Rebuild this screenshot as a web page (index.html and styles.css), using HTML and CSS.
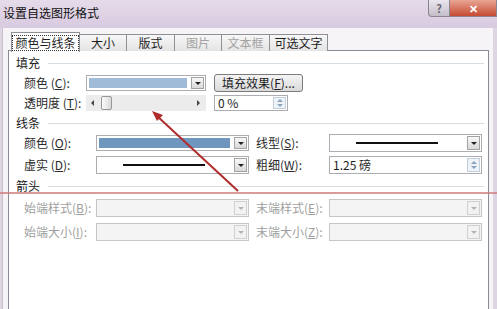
FILE: index.html
```html
<!DOCTYPE html>
<html lang="zh-CN">
<head>
    <meta charset="UTF-8">
    <title>设置自选图形格式</title>
    <link rel="stylesheet" href="styles.css">
</head>
<body>
    <div class="window">
        <div class="titlebar">
            <span class="title">设置自选图形格式</span>
            <div class="caption-buttons">
                <span class="cap-btn help">?</span>
                <span class="cap-btn close">✕</span>
            </div>
        </div>

        <div class="dialog">
            <div class="tabs">
                <span class="tab tab-colors selected"><span class="focus">颜色与线条</span></span>
                <span class="tab tab-size">大小</span>
                <span class="tab tab-layout">版式</span>
                <span class="tab tab-picture disabled">图片</span>
                <span class="tab tab-textbox disabled">文本框</span>
                <span class="tab tab-alt">可选文字</span>
            </div>

            <div class="panel">
                <!-- 填充 -->
                <div class="section-title first"><span>填充</span></div>
                <div class="row">
                    <span class="lbl lbl-fill">颜色 (<u>C</u>):</span>
                    <div class="combo combo-fill">
                        <span class="swatch swatch-fill"></span>
                        <span class="drop"></span>
                    </div>
                    <button class="btn">填充效果(<u>F</u>)...</button>
                </div>
                <div class="row compact">
                    <span class="lbl lbl-fill">透明度 (<u>T</u>):</span>
                    <div class="slider">
                        <span class="arrow-left"></span>
                        <span class="thumb"></span>
                        <span class="arrow-right"></span>
                    </div>
                    <div class="spin spin-alpha">
                        <span class="spin-text">0 %</span>
                        <span class="spin-arrows"><i class="up"></i><i class="down"></i></span>
                    </div>
                </div>

                <!-- 线条 -->
                <div class="section-title"><span>线条</span></div>
                <div class="row">
                    <span class="lbl lbl-line">颜色 (<u>O</u>):</span>
                    <div class="combo combo-line">
                        <span class="swatch swatch-line"></span>
                        <span class="drop"></span>
                    </div>
                    <span class="lbl lbl-right">线型(<u>S</u>):</span>
                    <div class="combo combo-line tall">
                        <span class="sample"><span class="stroke"></span></span>
                        <span class="drop"></span>
                    </div>
                </div>
                <div class="row">
                    <span class="lbl lbl-line">虚实 (<u>D</u>):</span>
                    <div class="combo combo-line tall">
                        <span class="sample"><span class="stroke"></span></span>
                        <span class="drop"></span>
                    </div>
                    <span class="lbl lbl-right">粗细(<u>W</u>):</span>
                    <div class="spin spin-weight">
                        <span class="spin-text">1.25 磅</span>
                        <span class="spin-arrows"><i class="up"></i><i class="down"></i></span>
                    </div>
                </div>

                <!-- 箭头 -->
                <div class="section-title loose"><span>箭头</span></div>
                <div class="row loose off">
                    <span class="lbl lbl-line">始端样式(<u>B</u>):</span>
                    <div class="combo combo-line tall"><span class="sample"></span><span class="drop"></span></div>
                    <span class="lbl lbl-right">末端样式(<u>E</u>):</span>
                    <div class="combo combo-line tall"><span class="sample"></span><span class="drop"></span></div>
                </div>
                <div class="row loose off">
                    <span class="lbl lbl-line">始端大小(<u>I</u>):</span>
                    <div class="combo combo-line tall"><span class="sample"></span><span class="drop"></span></div>
                    <span class="lbl lbl-right">末端大小(<u>Z</u>):</span>
                    <div class="combo combo-line tall"><span class="sample"></span><span class="drop"></span></div>
                </div>
            </div>
        </div>

        <!-- annotation drawn over the screenshot -->
        <svg class="annotation" width="497" height="309" viewBox="0 0 497 309">
            <line x1="0" y1="193" x2="497" y2="193" stroke="#cf7a7a" stroke-width="1.5"/>
            <line x1="238" y1="191" x2="157" y2="116" stroke="#b02c2c" stroke-width="2"/>
            <polygon points="152,111 163,115 157,121" fill="#b02c2c"/>
        </svg>
    </div>
</body>
</html>
```

FILE: styles.css
```css
* {
    margin: 0;
    padding: 0;
    box-sizing: border-box;
}

body {
    width: 497px;
    height: 309px;
    overflow: hidden;
    background: #ddd5e2;
    font-family: "Noto Sans CJK SC", "Liberation Sans", sans-serif;
    font-size: 12px;
    color: #1e1e1e;
}

.window {
    position: relative;
    height: 309px;
    display: flex;
    flex-direction: column;
}

/* Title bar */
.titlebar {
    height: 28px;
    display: flex;
    align-items: flex-start;
    background: linear-gradient(180deg, #e6dbe9, #d8cae0);
}

.title {
    padding: 5px 0 0 3px;
    line-height: 16px;
    color: #111;
}

.caption-buttons {
    margin-left: auto;
    display: flex;
}

.cap-btn {
    height: 17px;
    display: flex;
    align-items: center;
    justify-content: center;
    border: 1px solid #8b8590;
    border-top: none;
    font-size: 11px;
    line-height: 1;
}

.help {
    width: 22px;
    border-radius: 0 0 0 4px;
    background: linear-gradient(180deg, #ebe7ee, #c4bec9);
    color: #6a6670;
    font-weight: bold;
}

.close {
    width: 47px;
    border-left: none;
    background: linear-gradient(180deg, #e9a594, #c64a32);
    color: #fff;
    font-weight: bold;
}

/* Dialog body */
.dialog {
    flex: 1;
    display: flex;
    flex-direction: column;
    margin: 0 4px 0 2px;
    padding: 4px 4px 0 5px;
    background: #f6f4f7;
    border-left: 1px solid #c9c1cd;
}

.tabs {
    height: 19px;
    display: flex;
    align-items: flex-end;
    padding-left: 3px;
    position: relative;
    z-index: 1;
}

.tab {
    height: 17px;
    margin-right: -1px;
    display: flex;
    align-items: center;
    justify-content: center;
    border: 1px solid #8e9096;
    border-bottom: none;
    background: linear-gradient(180deg, #f7f7f7, #e4e4e4);
    line-height: 14px;
}

.tab.selected {
    height: 20px;
    margin-bottom: -1px;
    background: #fff;
}

.tab.disabled {
    color: #a3a3a3;
}

.focus {
    border: 1px dotted #333;
    padding: 0 2px;
}

.tab-colors { width: 69px; }
.tab-size { width: 48px; }
.tab-layout { width: 49px; }
.tab-picture { width: 48px; }
.tab-textbox { width: 49px; }
.tab-alt { width: 59px; }

.panel {
    flex: 1;
    margin-top: -1px;
    padding: 5px 4px 0 7px;
    background: #fff;
    border: 1px solid #898c95;
    border-bottom: none;
}

/* Sections */
.section-title {
    height: 14px;
    margin-top: 4px;
    display: flex;
    align-items: center;
    line-height: 14px;
    color: #1a1a1a;
}

.section-title.first {
    margin-top: 0;
}

.section-title.loose {
    margin-top: 5px;
}

.section-title::after {
    content: '';
    flex: 1;
    height: 1px;
    margin-left: 8px;
    background: #d6dde3;
}

.row {
    height: 18px;
    margin-top: 4px;
    padding-left: 8px;
    display: flex;
    align-items: center;
}

.row.compact {
    margin-top: 2px;
}

.row.loose {
    margin-top: 6px;
}

.lbl {
    flex-shrink: 0;
    white-space: nowrap;
    line-height: 14px;
    color: #2a2a2a;
}

.lbl u {
    text-underline-offset: 1px;
}

.lbl-fill { width: 62px; }
.lbl-line { width: 72px; }

.lbl-right {
    width: 73px;
    margin-left: 7px;
}

.off .lbl {
    color: #a0a0a0;
}

/* Combo boxes */
.combo {
    height: 16px;
    display: flex;
    align-items: stretch;
    border: 1px solid #abadb3;
    background: #fff;
}

.combo.tall {
    height: 18px;
}

.combo-fill { width: 120px; }
.combo-line { width: 153px; }

.swatch {
    flex: 1;
    margin: 2px 3px 2px 2px;
}

.swatch-fill { background: #9fbbd8; }
.swatch-line { background: #6f96bf; }

.sample {
    flex: 1;
    display: flex;
    align-items: center;
}

.stroke {
    width: 82px;
    height: 2px;
    margin-left: 26px;
    background: #111;
}

.drop {
    width: 13px;
    margin: 1px;
    display: flex;
    align-items: center;
    justify-content: center;
    border: 1px solid #a3a3a3;
    background: linear-gradient(180deg, #f8f8f8, #d9d9d9);
}

.drop::before {
    content: '';
    border-left: 3px solid transparent;
    border-right: 3px solid transparent;
    border-top: 3px solid #222;
}

.off .combo {
    border-color: #c6c6c6;
    background: #f4f4f4;
}

.off .drop {
    border-color: #d0d0d0;
    background: #f2f2f2;
}

.off .drop::before {
    border-top-color: #b3b3b3;
}

/* Button */
.btn {
    width: 89px;
    height: 18px;
    margin-left: 8px;
    border: 1px solid #7a7a7a;
    border-radius: 3px;
    background: linear-gradient(180deg, #f4f4f4, #dadada);
    font-family: inherit;
    font-size: 12px;
    line-height: 14px;
    color: #1e1e1e;
}

/* Slider */
.slider {
    width: 120px;
    height: 16px;
    display: flex;
    align-items: center;
    padding: 0 6px 0 5px;
    background: #ececec;
}

.arrow-left {
    border-top: 3px solid transparent;
    border-bottom: 3px solid transparent;
    border-right: 3px solid #444;
}

.arrow-right {
    margin-left: auto;
    border-top: 3px solid transparent;
    border-bottom: 3px solid transparent;
    border-left: 3px solid #444;
}

.thumb {
    width: 11px;
    height: 14px;
    margin-left: 7px;
    border: 1px solid #979797;
    border-radius: 2px;
    background: linear-gradient(90deg, #fdfdfd, #d8d8d8);
}

/* Spin boxes */
.spin {
    height: 16px;
    display: flex;
    align-items: stretch;
    border: 1px solid #abadb3;
    background: #fff;
}

.spin-alpha {
    width: 74px;
    margin-left: 8px;
}

.spin-weight {
    width: 153px;
    height: 18px;
}

.spin-text {
    flex: 1;
    padding-left: 3px;
    line-height: 14px;
    white-space: nowrap;
}

.spin-weight .spin-text {
    line-height: 16px;
}

.spin-arrows {
    width: 13px;
    margin: 1px;
    display: flex;
    flex-direction: column;
    align-items: center;
    justify-content: center;
    gap: 2px;
    border: 1px solid #c3cfdc;
    background: #eef3f8;
}

.spin-arrows .up {
    border-left: 3px solid transparent;
    border-right: 3px solid transparent;
    border-bottom: 3px solid #8aa3bd;
}

.spin-arrows .down {
    border-left: 3px solid transparent;
    border-right: 3px solid transparent;
    border-top: 3px solid #8aa3bd;
}

/* Red annotation over the dialog */
.annotation {
    position: absolute;
    top: 0;
    left: 0;
    pointer-events: none;
}
```
